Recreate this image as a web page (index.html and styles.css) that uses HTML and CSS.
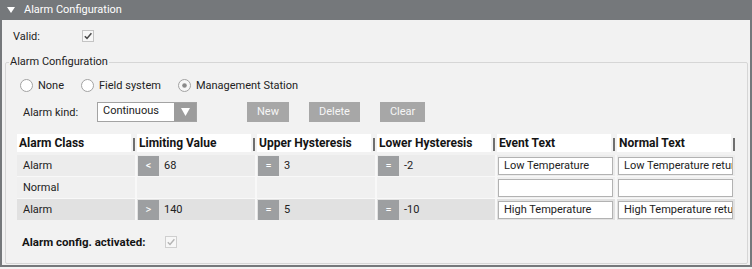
FILE: index.html
```html
<!DOCTYPE html>
<html>
<head>
<meta charset="utf-8">
<title>Alarm Configuration</title>
<link rel="stylesheet" href="styles.css">
</head>
<body>
<div class="panel">
  <div class="panel-header">
    <svg class="caret" width="8" height="6" viewBox="0 0 8 6"><path d="M0 0H8L4 6Z" fill="#ffffff"/></svg>
    <span class="panel-title">Alarm Configuration</span>
  </div>
  <div class="panel-body">
    <div class="valid-row">
      <span class="valid-label">Valid:</span>
      <svg class="checkbox" width="12" height="12" viewBox="0 0 12 12"><rect x="0.5" y="0.5" width="11" height="11" fill="#f7f7f7" stroke="#c4c4c4"/><path d="M2.8 6.2L5 8.4L9.4 3.2" fill="none" stroke="#4a4a4a" stroke-width="1.5"/></svg>
    </div>
    <fieldset class="group">
      <legend class="group-legend">Alarm Configuration</legend>
      <div class="radios">
        <label class="radio-item">
          <svg class="radio" width="13" height="13" viewBox="0 0 13 13"><circle cx="6.5" cy="6.5" r="6" fill="#ffffff" stroke="#a2a2a2"/></svg>
          <span>None</span>
        </label>
        <label class="radio-item">
          <svg class="radio" width="13" height="13" viewBox="0 0 13 13"><circle cx="6.5" cy="6.5" r="6" fill="#ffffff" stroke="#a2a2a2"/></svg>
          <span>Field system</span>
        </label>
        <label class="radio-item">
          <svg class="radio" width="13" height="13" viewBox="0 0 13 13"><circle cx="6.5" cy="6.5" r="6" fill="#f7f7f7" stroke="#a2a2a2"/><circle cx="6.5" cy="6.5" r="2.3" fill="#8a8a8a"/></svg>
          <span>Management Station</span>
        </label>
      </div>
      <div class="kind-row">
        <span class="kind-label">Alarm kind:</span>
        <div class="dropdown">
          <span class="dropdown-value">Continuous</span>
          <span class="dropdown-arrow"><svg width="9" height="8" viewBox="0 0 9 8"><path d="M0 0H9L4.5 8Z" fill="#ffffff"/></svg></span>
        </div>
        <div class="actions">
          <span class="btn">New</span>
          <span class="btn">Delete</span>
          <span class="btn">Clear</span>
        </div>
      </div>
      <div class="table">
        <div class="row head">
          <div class="hcell"><span class="htext">Alarm Class</span><span class="grip"></span></div>
          <div class="hcell"><span class="htext">Limiting Value</span><span class="grip"></span></div>
          <div class="hcell"><span class="htext">Upper Hysteresis</span><span class="grip"></span></div>
          <div class="hcell"><span class="htext">Lower Hysteresis</span><span class="grip"></span></div>
          <div class="hcell"><span class="htext">Event Text</span><span class="grip"></span></div>
          <div class="hcell"><span class="htext">Normal Text</span><span class="grip"></span></div>
        </div>
        <div class="rows">
          <div class="row r1">
            <div class="cell text">Alarm</div>
            <div class="cell"><span class="op">&lt;</span><span class="val">68</span></div>
            <div class="cell"><span class="op">=</span><span class="val">3</span></div>
            <div class="cell"><span class="op">=</span><span class="val">-2</span></div>
            <div class="cell"><input class="input" type="text" readonly value="Low Temperature"></div>
            <div class="cell"><input class="input" type="text" readonly value="Low Temperature returned"></div>
          </div>
          <div class="row r2">
            <div class="cell text">Normal</div>
            <div class="cell"></div>
            <div class="cell"></div>
            <div class="cell"></div>
            <div class="cell"><input class="input" type="text" readonly value=""></div>
            <div class="cell"><input class="input" type="text" readonly value=""></div>
          </div>
          <div class="row r3">
            <div class="cell text">Alarm</div>
            <div class="cell"><span class="op">&gt;</span><span class="val">140</span></div>
            <div class="cell"><span class="op">=</span><span class="val">5</span></div>
            <div class="cell"><span class="op">=</span><span class="val">-10</span></div>
            <div class="cell"><input class="input" type="text" readonly value="High Temperature"></div>
            <div class="cell"><input class="input" type="text" readonly value="High Temperature returned"></div>
          </div>
        </div>
      </div>
      <div class="activated-row">
        <span class="activated-label">Alarm config. activated:</span>
        <svg class="checkbox" width="12" height="12" viewBox="0 0 12 12"><rect x="0.5" y="0.5" width="11" height="11" fill="#f7f7f7" stroke="#cfcfcf"/><path d="M2.8 6.2L5 8.4L9.4 3.2" fill="none" stroke="#b4b4b4" stroke-width="1.4"/></svg>
      </div>
    </fieldset>
  </div>
</div>
</body>
</html>
```
FILE: styles.css
```css
html, body {
  margin: 0;
  padding: 0;
  background: #f2f2f2;
}
body {
  font-family: Roboto, "Open Sans", sans-serif;
  font-size: 11px;
  color: #222222;
}
.panel {
  width: 752px;
  height: 267px;
  display: flex;
  flex-direction: column;
}
.panel-header {
  height: 20px;
  flex: none;
  background: #75787b;
  color: #ffffff;
  display: flex;
  align-items: center;
  padding-left: 7px;
  gap: 9px;
}
.caret { display: block; }
.panel-title { line-height: 16px; }
.panel-body {
  flex: 1;
  background: #f2f2f2;
  border-style: solid;
  border-color: #75787b;
  border-width: 0 2px 2px 2px;
  display: flex;
  flex-direction: column;
  padding: 6px 2px 0 3px;
}
.valid-row {
  height: 20px;
  display: flex;
  align-items: center;
  padding-left: 8px;
}
.valid-label { width: 69px; }
.checkbox { display: block; }
.group {
  margin: 8px 0 0 0;
  padding: 0 0 13px 0;
  border: 1px solid #d6d6d6;
  border-radius: 2px;
  min-width: 0;
}
.group-legend {
  margin-left: 3px;
  padding: 0 1px;
  line-height: 16px;
}
.radios {
  margin-top: 7px;
  height: 16px;
  display: flex;
  align-items: center;
  gap: 17px;
  padding-left: 14px;
}
.radio-item {
  display: flex;
  align-items: center;
  gap: 5px;
}
.radio { display: block; }
.kind-row {
  margin-top: 9px;
  height: 20px;
  display: flex;
  align-items: center;
  padding-left: 17px;
}
.kind-label { width: 74px; }
.dropdown {
  width: 100px;
  height: 20px;
  box-sizing: border-box;
  border: 1px solid #a3a3a3;
  background: #ffffff;
  display: flex;
}
.dropdown-value {
  flex: 1;
  padding-left: 5px;
  line-height: 16px;
}
.dropdown-arrow {
  width: 22px;
  background: #9c9c9c;
  display: flex;
  align-items: center;
  justify-content: center;
}
.dropdown-arrow svg { display: block; }
.actions {
  margin-left: 50px;
  display: flex;
  gap: 20px;
}
.btn {
  height: 20px;
  line-height: 20px;
  padding: 0 10px;
  background: #a7a7a7;
  color: #f6f6f6;
}
.table {
  margin: 12px 0 0 11px;
  width: 718px;
  display: flex;
  flex-direction: column;
  gap: 3px;
}
.row {
  display: grid;
  grid-template-columns: repeat(6, 118px);
  column-gap: 2px;
}
.head { height: 18px; }
.hcell {
  display: flex;
  align-items: flex-end;
}
.htext {
  flex: 1;
  align-self: stretch;
  background: #ffffff;
  font-weight: bold;
  font-size: 12px;
  color: #141414;
  padding-left: 2px;
  line-height: 18px;
  margin-right: 2px;
}
.grip {
  width: 2px;
  height: 13px;
  margin-bottom: 1px;
  background: #6f6f6f;
}
.rows {
  display: flex;
  flex-direction: column;
  gap: 1px;
  background: #f8f8f8;
}
.rows .row { height: 21px; }
.cell {
  display: flex;
  align-items: center;
  padding-left: 1px;
  overflow: hidden;
}
.r1 .cell { background: #ececec; }
.r2 .cell { background: #f0f0f0; }
.r3 .cell { background: #e1e1e1; }
.cell.text { padding-left: 6px; }
.op {
  width: 21px;
  height: 20px;
  line-height: 20px;
  text-align: center;
  background: #9d9fa1;
  color: #ffffff;
  flex: none;
}
.val { margin-left: 5px; }
.input {
  width: 115px;
  height: 18px;
  box-sizing: border-box;
  margin: 0;
  border: 1px solid #b2b2b2;
  border-radius: 0;
  background: #ffffff;
  padding: 0 0 0 5px;
  font: inherit;
  color: #222222;
  line-height: 16px;
  outline: none;
  flex: none;
}
.activated-row {
  margin-top: 14px;
  height: 16px;
  display: flex;
  align-items: center;
  padding-left: 16px;
}
.activated-label {
  font-weight: bold;
  font-size: 11.5px;
  color: #141414;
  width: 143px;
}
```
